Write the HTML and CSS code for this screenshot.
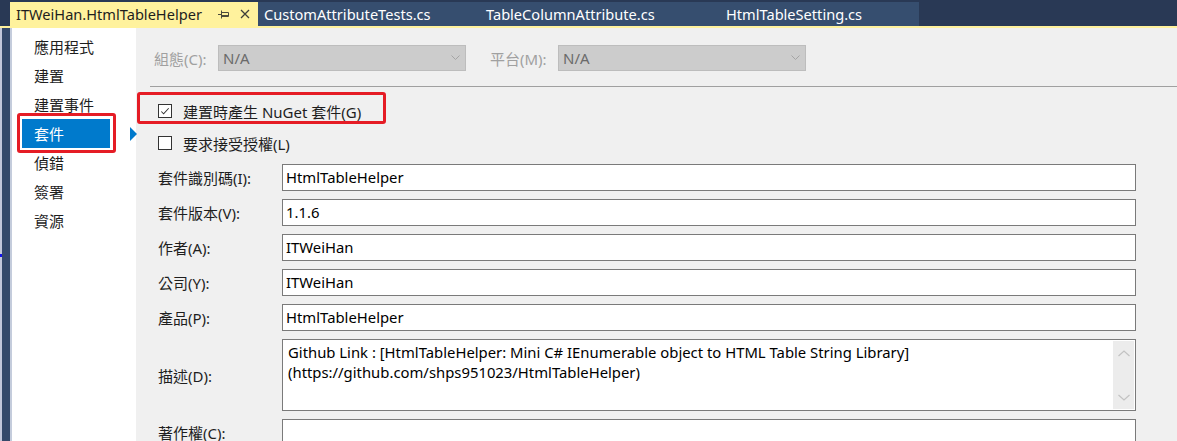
FILE: index.html
```html
<!DOCTYPE html>
<html lang="zh-Hant">
<head>
<meta charset="utf-8">
<title>ITWeiHan.HtmlTableHelper</title>
<link rel="stylesheet" href="styles.css">
</head>
<body>
<div class="tabbar">
  <div class="tab tab-active">
    <span class="tab-title">ITWeiHan.HtmlTableHelper</span>
    <svg class="pin" width="12" height="10" viewBox="0 0 12 10"><path d="M0 5.5H3.5M3.5 1.5V9.5M3.5 3.5H10.5V7.5H3.5M3.5 6.5H10.5" fill="none" stroke="#4b4b3c" stroke-width="1"/></svg>
    <svg class="close" width="10" height="10" viewBox="0 0 10 10"><path d="M1 1L9 9M9 1L1 9" fill="none" stroke="#3f3f3a" stroke-width="1.3"/></svg>
  </div>
  <div class="tabs-rest">
    <div class="tab tab-1">CustomAttributeTests.cs</div>
    <div class="tab tab-2">TableColumnAttribute.cs</div>
    <div class="tab tab-3">HtmlTableSetting.cs</div>
  </div>
</div>
<div class="main">
  <div class="edge"><span class="edge-mark"></span></div>
  <nav class="nav">
    <div class="nav-item">應用程式</div>
    <div class="nav-item">建置</div>
    <div class="nav-item">建置事件</div>
    <div class="nav-item selected">套件<span class="mark-box nav-mark"></span></div>
    <div class="nav-item">偵錯</div>
    <div class="nav-item">簽署</div>
    <div class="nav-item">資源</div>
  </nav>
  <section class="content">
    <span class="sel-arrow"></span>
    <div class="config-row">
      <span class="cfg-label cfg-label-1">組態(C):</span>
      <div class="combo"><span>N/A</span><svg width="9" height="6" viewBox="0 0 9 6"><path d="M0.5 0.5L4.5 4.5L8.5 0.5" fill="none" stroke="#a4a4a4" stroke-width="1"/></svg></div>
      <span class="cfg-label cfg-label-2">平台(M):</span>
      <div class="combo"><span>N/A</span><svg width="9" height="6" viewBox="0 0 9 6"><path d="M0.5 0.5L4.5 4.5L8.5 0.5" fill="none" stroke="#a4a4a4" stroke-width="1"/></svg></div>
    </div>
    <div class="sep"></div>
    <div class="check-row">
      <span class="checkbox"><svg width="13" height="13" viewBox="0 0 13 13"><path d="M2.5 6.5L5 9L10.5 3" fill="none" stroke="#333" stroke-width="1.1"/></svg></span>
      <span>建置時產生 NuGet 套件(G)</span>
      <span class="mark-box check-mark"></span>
    </div>
    <div class="check-row">
      <span class="checkbox"></span>
      <span>要求接受授權(L)</span>
    </div>
    <div class="form">
      <label class="f-label">套件識別碼(I):</label>
      <div class="field">HtmlTableHelper</div>
      <label class="f-label">套件版本(V):</label>
      <div class="field">1.1.6</div>
      <label class="f-label">作者(A):</label>
      <div class="field">ITWeiHan</div>
      <label class="f-label">公司(Y):</label>
      <div class="field">ITWeiHan</div>
      <label class="f-label">產品(P):</label>
      <div class="field">HtmlTableHelper</div>
      <label class="f-label">描述(D):</label>
      <div class="field area">
        <div class="area-text">Github Link : [HtmlTableHelper: Mini C# IEnumerable object to HTML Table String Library]<br>(https://github.com/shps951023/HtmlTableHelper)</div>
        <div class="vscroll">
          <svg width="12" height="7" viewBox="0 0 12 7"><path d="M0.5 6L6 1L11.5 6" fill="none" stroke="#c2c2c2" stroke-width="1.2"/></svg>
          <svg width="12" height="7" viewBox="0 0 12 7"><path d="M0.5 1L6 6L11.5 1" fill="none" stroke="#c2c2c2" stroke-width="1.2"/></svg>
        </div>
      </div>
      <label class="f-label">著作權(C):</label>
      <div class="field"></div>
    </div>
  </section>
</div>
</body>
</html>
```
FILE: styles.css
```css
* { box-sizing: border-box; }

html, body {
  margin: 0;
  padding: 0;
}

body {
  width: 1177px;
  height: 441px;
  overflow: hidden;
  background: #f0f0f0;
  font-family: "Noto Sans", "Noto Sans CJK TC", sans-serif;
  font-size: 15px;
  color: #1e1e1e;
}

/* ---------- tab bar ---------- */
.tabbar {
  height: 28px;
  background: #293955;
  border-bottom: 2px solid #fff29d;
  display: flex;
  align-items: flex-end;
  padding-left: 10px;
}

.tab {
  height: 24px;
  display: flex;
  align-items: center;
  white-space: nowrap;
  font-size: 14.6px;
  line-height: 1;
}

.tab-active {
  width: 248px;
  background: #fff29d;
  color: #1e1e1e;
  padding-left: 6px;
}

.tab-title { width: 202px; }

.pin { margin-right: 10px; }

.tabs-rest {
  display: flex;
  background: #364e6f;
  width: 661px;
}

.tabs-rest .tab { color: #ffffff; padding-left: 6px; }
.tab-1 { width: 222px; }
.tab-2 { width: 240px; }
.tab-3 { width: 199px; }

/* ---------- main ---------- */
.main {
  display: flex;
  height: 413px;
}

.edge {
  width: 12px;
  background: #35496a;
  border-left: 2px solid #c3c7da;
  border-right: 2px solid #c4ccdc;
  position: relative;
}

.edge-mark {
  position: absolute;
  left: -2px;
  top: 226px;
  width: 2px;
  height: 3px;
  background: #1010ee;
}

.nav {
  width: 124px;
  background: #ffffff;
  padding-top: 4px;
}

.nav-item {
  height: 29px;
  line-height: 29px;
  padding-left: 22px;
  font-family: "Noto Sans CJK TC", sans-serif;
  font-size: 15px;
  color: #1e1e1e;
  position: relative;
}

.nav-item.selected {
  margin-left: 10px;
  width: 88px;
  padding-left: 12px;
  background: #007acc;
  color: #ffffff;
}

.mark-box {
  position: absolute;
  border: 3px solid #e51c25;
  border-radius: 3px;
}

.nav-mark {
  left: -5px;
  top: -6px;
  width: 99px;
  height: 40px;
}

/* ---------- content ---------- */
.content {
  flex: 1;
  position: relative;
  padding-top: 17px;
}

.sel-arrow {
  position: absolute;
  left: -6px;
  top: 99px;
  width: 0;
  height: 0;
  border-top: 7px solid transparent;
  border-bottom: 7px solid transparent;
  border-left: 7px solid #007acc;
}

.config-row {
  display: flex;
  align-items: center;
  height: 26px;
  padding-left: 18px;
}

.cfg-label {
  color: #a0a0a0;
  font-size: 15px;
}

.cfg-label-1 { width: 64px; }
.cfg-label-2 { width: 68px; margin-left: 24px; }

.combo {
  width: 248px;
  height: 26px;
  background: #cccccc;
  border: 1px solid #bdbdbd;
  display: flex;
  align-items: center;
  justify-content: space-between;
  padding: 0 5px 0 4px;
  color: #6a6a6a;
}

.sep {
  height: 1px;
  background: #a0a0a0;
  margin: 15px 0 0 14px;
}

.check-row {
  position: relative;
  height: 32px;
  display: flex;
  align-items: center;
  padding-left: 22px;
  gap: 11px;
}

.sep + .check-row { margin-top: 8px; }

.checkbox {
  width: 14px;
  height: 14px;
  border: 1px solid #333333;
  background: #ffffff;
  display: flex;
}

.checkbox svg { display: block; }

.check-mark {
  left: 1px;
  top: -3px;
  width: 249px;
  height: 32px;
}

.form {
  margin-top: 5px;
  display: grid;
  grid-template-columns: 124px 854px;
  grid-template-rows: 27px 27px 27px 27px 27px 72px 27px;
  row-gap: 8px;
  padding-left: 22px;
}

.f-label {
  display: flex;
  align-items: center;
  white-space: nowrap;
}

.field {
  background: #ffffff;
  border: 1px solid #7a7a7a;
  padding: 0 0 2px 3px;
  display: flex;
  align-items: center;
  color: #000000;
  white-space: nowrap;
  font-size: 14.85px;
}

.field.area {
  align-items: stretch;
  justify-content: space-between;
  padding: 1px 1px 1px 5px;
}

.area-text {
  line-height: 20px;
  padding-top: 1px;
}

.vscroll {
  width: 21px;
  background: #ececec;
  display: flex;
  flex-direction: column;
  justify-content: space-between;
  align-items: center;
  padding: 9px 0 8px;
}

.vscroll svg { display: block; }
```
